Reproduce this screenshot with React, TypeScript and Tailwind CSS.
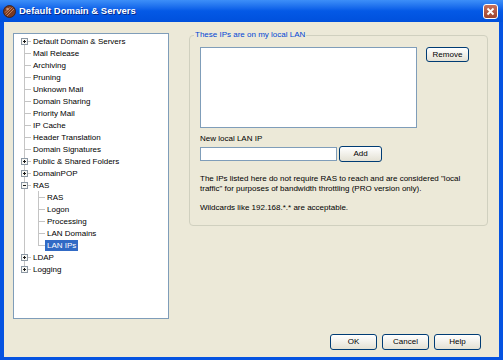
import React from 'react';

// Arborescence des rubriques (niveau, boîte +/-, sélection)
type TreeItem = {
  label: string;
  level: 0 | 1;
  box?: 'plus' | 'minus';
  selected?: boolean;
  first?: boolean;
  last?: boolean;
  lastChild?: boolean;
};

const TREE: TreeItem[] = [
  { label: 'Default Domain & Servers', level: 0, box: 'plus', first: true },
  { label: 'Mail Release', level: 0 },
  { label: 'Archiving', level: 0 },
  { label: 'Pruning', level: 0 },
  { label: 'Unknown Mail', level: 0 },
  { label: 'Domain Sharing', level: 0 },
  { label: 'Priority Mail', level: 0 },
  { label: 'IP Cache', level: 0 },
  { label: 'Header Translation', level: 0 },
  { label: 'Domain Signatures', level: 0 },
  { label: 'Public & Shared Folders', level: 0, box: 'plus' },
  { label: 'DomainPOP', level: 0, box: 'plus' },
  { label: 'RAS', level: 0, box: 'minus' },
  { label: 'RAS', level: 1 },
  { label: 'Logon', level: 1 },
  { label: 'Processing', level: 1 },
  { label: 'LAN Domains', level: 1 },
  { label: 'LAN IPs', level: 1, selected: true, lastChild: true },
  { label: 'LDAP', level: 0, box: 'plus' },
  { label: 'Logging', level: 0, box: 'plus', last: true },
];

const LINE = '#c4c4c4';

function Gutter({ item }: { item: TreeItem }) {
  if (item.level === 1) {
    return (
      <svg width="31" height="12" className="shrink-0" shapeRendering="crispEdges">
        <line x1="10.5" y1="0" x2="10.5" y2="12" stroke={LINE} />
        <line x1="24.5" y1="0" x2="24.5" y2={item.lastChild ? 7 : 12} stroke={LINE} />
        <line x1="24" y1="6.5" x2="31" y2="6.5" stroke={LINE} />
      </svg>
    );
  }
  return (
    <svg width="17" height="12" className="shrink-0" shapeRendering="crispEdges">
      <line x1="10.5" y1={item.first ? 6 : 0} x2="10.5" y2={item.last ? 7 : 12} stroke={LINE} />
      <line x1="10" y1="6.5" x2="17" y2="6.5" stroke={LINE} />
      {item.box && (
        <>
          <rect x="7.5" y="3.5" width="6" height="6" fill="#f7f7f3" stroke="#8c98a4" />
          <line x1="9" y1="6.5" x2="12" y2="6.5" stroke="#1a1a1a" />
          {item.box === 'plus' && <line x1="10.5" y1="5" x2="10.5" y2="8" stroke="#1a1a1a" />}
        </>
      )}
    </svg>
  );
}

function XpButton({ label, className }: { label: string; className: string }) {
  return (
    <button
      type="button"
      className={`flex items-center justify-center rounded-[3px] border border-[#003c74] bg-linear-to-b from-[#ffffff] to-[#e4e1d4] text-[8px] leading-none text-black ${className}`}
    >
      {label}
    </button>
  );
}

export default function App() {
  return (
    <div className="flex h-[360px] w-[503px] flex-col overflow-hidden bg-[#0553e1] font-['Liberation_Sans',Arial,sans-serif]">
      {/* Barre de titre */}
      <div className="flex h-[22px] shrink-0 items-center bg-linear-to-b from-[#3d8ff8] via-[#0459e6] to-[#0050dc] pl-[3px] pr-[5px]">
        <svg width="13" height="13" viewBox="0 0 13 13" className="shrink-0">
          <circle cx="6.5" cy="6.5" r="6" fill="#7b3a22" stroke="#3a1a0e" strokeWidth="0.8" />
          <path d="M2.5 9.5 L9.5 2.5 M4 11 L11 4 M2 7.5 L7.5 2" stroke="#c98a66" strokeWidth="0.9" />
          <circle cx="4.5" cy="4" r="1.3" fill="#e2b59a" opacity="0.7" />
        </svg>
        <span className="ml-[3px] text-[9.5px] font-bold text-white [text-shadow:1px_1px_0_#0a2a8a]">
          Default Domain &amp; Servers
        </span>
        <div className="ml-auto flex h-[15px] w-[15px] items-center justify-center rounded-[3px] border border-white bg-linear-to-b from-[#c9705a] to-[#9c4430]">
          <svg width="9" height="9" viewBox="0 0 9 9">
            <path d="M1.5 1.5 L7.5 7.5 M7.5 1.5 L1.5 7.5" stroke="#ffffff" strokeWidth="1.8" />
          </svg>
        </div>
      </div>

      {/* Zone cliente */}
      <div className="ml-[4px] mr-[4px] mb-[3px] flex flex-1 flex-col bg-[#ece9d8] pl-[9px] pr-[11px] pt-[8px] text-[8px] leading-[10px] text-black">
        <div className="flex items-start gap-[20px]">
          {/* Arbre de navigation */}
          <div className="mt-[3px] h-[286px] w-[156px] shrink-0 border border-[#7f9db9] bg-white pt-[1px]">
            {TREE.map((item, i) => (
              <div key={i} className="flex h-[12px] items-center">
                <Gutter item={item} />
                <span
                  className={`whitespace-nowrap px-[2px] leading-[11px] ${
                    item.selected ? 'bg-[#316ac5] text-white' : ''
                  }`}
                >
                  {item.label}
                </span>
              </div>
            ))}
          </div>

          {/* Groupe IPs locales */}
          <fieldset className="h-[196px] flex-1 rounded-[4px] border border-[#d0d0bf] p-0">
            <legend className="ml-[4px] px-[1px] text-[#0046d5]">These IPs are on my local LAN</legend>
            <div className="px-[10px] pt-[7px]">
              <div className="flex items-start gap-[9px]">
                <div className="h-[81px] w-[217px] border border-[#7f9db9] bg-white" />
                <XpButton label="Remove" className="h-[15px] w-[43px]" />
              </div>
              <div className="mt-[6px]">New local LAN IP</div>
              <div className="mt-[2px] flex items-center gap-[2px]">
                <div className="h-[14px] w-[137px] border border-[#7f9db9] bg-white" />
                <XpButton label="Add" className="h-[16px] w-[43px]" />
              </div>
              <p className="mt-[12px] whitespace-nowrap">
                The IPs listed here do not require RAS to reach and are considered &quot;local
                <br />
                traffic&quot; for purposes of bandwidth throttling (PRO version only).
              </p>
              <p className="mt-[9px]">Wildcards like 192.168.*.* are acceptable.</p>
            </div>
          </fieldset>
        </div>

        {/* Boutons du bas */}
        <div className="mt-auto flex justify-end gap-[5px] pb-[7px] pr-[7px]">
          <XpButton label="OK" className="h-[16px] w-[47px]" />
          <XpButton label="Cancel" className="h-[16px] w-[47px]" />
          <XpButton label="Help" className="h-[16px] w-[47px]" />
        </div>
      </div>
    </div>
  );
}
